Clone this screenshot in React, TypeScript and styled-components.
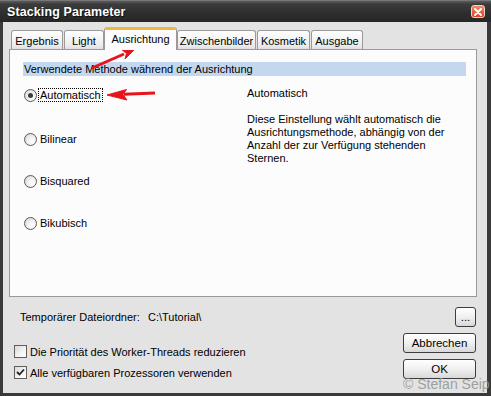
import React from "react";
import styled, { createGlobalStyle, css } from "styled-components";

const GlobalStyle = createGlobalStyle`
  html, body { margin: 0; padding: 0; width: 491px; height: 396px; overflow: hidden; background: #2a2a2a; }
  body { font-family: "Liberation Sans", Arial, sans-serif; font-size: 11px; color: #000; }
  * { box-sizing: border-box; }
`;

const Window = styled.div`
  position: relative;
  width: 491px;
  height: 396px;
  display: flex;
  flex-direction: column;
`;

const TitleBar = styled.div`
  height: 22px;
  flex: none;
  display: flex;
  align-items: center;
  justify-content: space-between;
  padding: 0 6px 0 7px;
  background: linear-gradient(#5c5c5c 0%, #3c3c3c 15%, #2e2e2e 60%, #262626 100%);
  border-top: 1px solid #777;
`;

const Title = styled.span`
  color: #fff;
  font-weight: bold;
  font-size: 12.5px;
  letter-spacing: 0.1px;
  text-shadow: 1px 1px 0 #111;
`;

const CloseButton = styled.div`
  width: 14px;
  height: 13px;
  border-radius: 3px;
  border: 1px solid #f3d2c8;
  background: linear-gradient(#f08a6a, #d8431e);
  display: flex;
  align-items: center;
  justify-content: center;
`;

const Frame = styled.div`
  flex: 1;
  display: flex;
  flex-direction: column;
  background: #e3e3e3;
  border-left: 3px solid #3a3a3a;
  border-right: 4px solid #3a3a3a;
  border-bottom: 3px solid #3a3a3a;
  padding: 5px 10px 0 6px;
`;

const TabStrip = styled.div`
  height: 23px;
  display: flex;
  align-items: flex-end;
  gap: 1px;
  padding-left: 2px;
  margin-bottom: -1px;
  position: relative;
  z-index: 1;
`;

const Tab = styled.div<{ $w: number; $active?: boolean }>`
  width: ${(p) => p.$w}px;
  text-align: center;
  border: 1px solid #9a9a9a;
  border-bottom: none;
  border-radius: 3px 3px 0 0;
  white-space: nowrap;
  ${(p) =>
    p.$active
      ? css`
          height: 23px;
          background: #fcfcfc;
          border-top: 3px solid #f2b640;
          padding-top: 3px;
          margin-left: -1px;
          margin-right: -1px;
          width: ${p.$w + 2}px;
        `
      : css`
          height: 19px;
          margin-bottom: 1px;
          background: linear-gradient(#ffffff, #ececec 80%, #dedede);
          padding-top: 4px;
        `}
`;

const Panel = styled.div`
  height: 248px;
  flex: none;
  border: 1px solid #9a9a9a;
  background: #fcfcfc;
  padding: 12px 10px 0 13px;
`;

const SectionHeader = styled.div`
  height: 14px;
  line-height: 14px;
  padding-left: 1px;
  background: #c3d8ef;
`;

const Content = styled.div`
  display: grid;
  grid-template-columns: 223px 1fr;
  padding-left: 1px;
`;

const RadioList = styled.div`
  display: flex;
  flex-direction: column;
  gap: 26px;
  padding-top: 11px;
`;

const RadioRow = styled.div<{ $extra?: number }>`
  height: 16px;
  display: flex;
  align-items: center;
  gap: 1px;
  margin-bottom: ${(p) => p.$extra ?? 0}px;
`;

const RadioCircle = styled.span<{ $checked?: boolean }>`
  width: 13px;
  height: 13px;
  border-radius: 50%;
  border: 1px solid #5a5a5a;
  background: radial-gradient(circle at 65% 65%, #ffffff 0%, #f2f2f2 40%, #cfcfcf 100%);
  display: flex;
  align-items: center;
  justify-content: center;
  &::after {
    content: "";
    width: 5px;
    height: 5px;
    border-radius: 50%;
    background: ${(p) => (p.$checked ? "#3c3c3c" : "transparent")};
  }
`;

const RadioLabel = styled.span<{ $focus?: boolean }>`
  padding: 0 1px;
  line-height: 12px;
  border: 1px dotted ${(p) => (p.$focus ? "#000" : "transparent")};
`;

const Description = styled.div`
  padding-top: 11px;
  line-height: 13px;
`;

const DescTitle = styled.div`
  margin-bottom: 13px;
`;

const BottomArea = styled.div`
  display: flex;
  flex-direction: column;
  padding-right: 1px;
`;

const FolderRow = styled.div`
  height: 20px;
  margin-top: 10px;
  display: flex;
  align-items: center;
`;

const FolderLabel = styled.span`
  margin-left: 11px;
  width: 128px;
`;

const FolderPath = styled.span`
  flex: 1;
`;

const Button = styled.div<{ $w: number }>`
  width: ${(p) => p.$w}px;
  height: 20px;
  border: 1px solid #3d3d3d;
  border-radius: 3px;
  background: linear-gradient(#ffffff, #f0f0f0 50%, #d8d8d8);
  display: flex;
  align-items: center;
  justify-content: center;
  font-size: 11.5px;
`;

const ActionRow = styled.div`
  display: flex;
  justify-content: space-between;
  margin-top: 6px;
`;

const CheckList = styled.div`
  display: flex;
  flex-direction: column;
  gap: 8px;
  padding-top: 12px;
  margin-left: 5px;
`;

const CheckRow = styled.div`
  height: 13px;
  display: flex;
  align-items: center;
  gap: 3px;
`;

const CheckBox = styled.span`
  width: 13px;
  height: 13px;
  border: 1px solid #5e5e5e;
  background: linear-gradient(135deg, #d9d9d9, #f4f4f4 60%, #ffffff);
  display: flex;
  align-items: center;
  justify-content: center;
`;

const ButtonColumn = styled.div`
  display: flex;
  flex-direction: column;
  gap: 6px;
`;

const Watermark = styled.div`
  position: absolute;
  left: 403px;
  top: 376px;
  font-family: "Liberation Sans", Arial, sans-serif;
  font-size: 14px;
  line-height: 17px;
  color: rgba(150, 150, 150, 0.9);
  white-space: nowrap;
`;

const Overlay = styled.svg`
  position: absolute;
  left: 0;
  top: 0;
  pointer-events: none;
`;

const tabs = [
  { label: "Ergebnis", w: 52 },
  { label: "Light", w: 40 },
  { label: "Ausrichtung", w: 71, active: true },
  { label: "Zwischenbilder", w: 79 },
  { label: "Kosmetik", w: 53 },
  { label: "Ausgabe", w: 52 },
];

const methods = ["Automatisch", "Bilinear", "Bisquared", "Bikubisch"];

export default function App() {
  return (
    <>
      <GlobalStyle />
      <Window>
        <TitleBar>
          <Title>Stacking Parameter</Title>
          <CloseButton>
            <svg width="8" height="8" viewBox="0 0 8 8">
              <path d="M1 1 L7 7 M7 1 L1 7" stroke="#fff" strokeWidth="2" strokeLinecap="round" />
            </svg>
          </CloseButton>
        </TitleBar>
        <Frame>
          <TabStrip>
            {tabs.map((t) => (
              <Tab key={t.label} $w={t.w} $active={t.active}>
                {t.label}
              </Tab>
            ))}
          </TabStrip>
          <Panel>
            <SectionHeader>Verwendete Methode während der Ausrichtung</SectionHeader>
            <Content>
              <RadioList>
                {methods.map((m, i) => (
                  <RadioRow key={m} $extra={i === 0 ? 2 : 0}>
                    <RadioCircle $checked={i === 0} />
                    <RadioLabel $focus={i === 0}>{m}</RadioLabel>
                  </RadioRow>
                ))}
              </RadioList>
              <Description>
                <DescTitle>Automatisch</DescTitle>
                Diese Einstellung wählt automatisch die
                <br />
                Ausrichtungsmethode, abhängig von der
                <br />
                Anzahl der zur Verfügung stehenden
                <br />
                Sternen.
              </Description>
            </Content>
          </Panel>
          <BottomArea>
            <FolderRow>
              <FolderLabel>Temporärer Dateiordner:</FolderLabel>
              <FolderPath>C:\Tutorial\</FolderPath>
              <Button $w={21}>...</Button>
            </FolderRow>
            <ActionRow>
              <CheckList>
                <CheckRow>
                  <CheckBox />
                  Die Priorität des Worker-Threads reduzieren
                </CheckRow>
                <CheckRow>
                  <CheckBox>
                    <svg width="9" height="9" viewBox="0 0 9 9">
                      <path d="M1 4 L3.5 6.5 L8 1.5" stroke="#222" strokeWidth="1.8" fill="none" />
                    </svg>
                  </CheckBox>
                  Alle verfügbaren Prozessoren verwenden
                </CheckRow>
              </CheckList>
              <ButtonColumn>
                <Button $w={73}>Abbrechen</Button>
                <Button $w={73}>OK</Button>
              </ButtonColumn>
            </ActionRow>
          </BottomArea>
        </Frame>
        <Watermark>© Stefan Seip</Watermark>
        <Overlay width="491" height="396" viewBox="0 0 491 396">
          <g fill="#e8141b" stroke="#e8141b">
            <line x1="92" y1="68" x2="124" y2="54" strokeWidth="3" />
            <path d="M136 48 L125 59 L126.5 53.5 L121 49 Z" strokeWidth="1" />
            <line x1="155" y1="93" x2="124" y2="94.3" strokeWidth="3" />
            <path d="M107 95 L127 100 L123 94.4 L126.5 89.5 Z" strokeWidth="1" />
          </g>
        </Overlay>
      </Window>
    </>
  );
}
